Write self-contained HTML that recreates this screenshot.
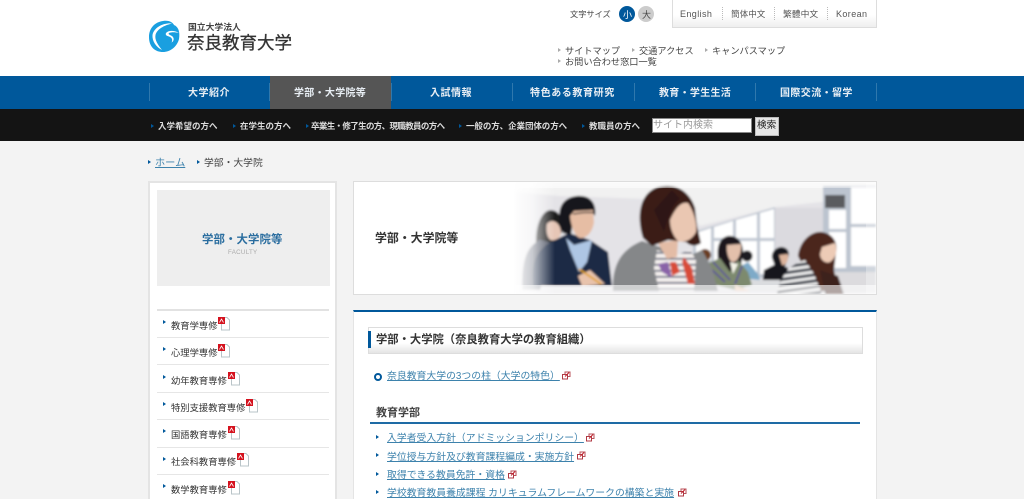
<!DOCTYPE html>
<html lang="ja"><head><meta charset="utf-8"><title>学部・大学院</title>
<style>
html,body{margin:0;padding:0;width:1024px;height:499px;overflow:hidden}
body{background:#f3f3f3;font-family:"Liberation Sans","Noto Sans CJK JP",sans-serif;color:#333}
#r{left:0;top:0;width:1024px;height:499px;overflow:hidden;background:#f3f3f3;filter:blur(.35px)}
div,span,a,svg{position:absolute;display:block}
.t{white-space:nowrap;line-height:14px;height:14px}
a{color:#3d82ac;text-decoration:underline}
.n{color:#e8eef4;font-weight:700;font-size:10px;letter-spacing:.5px;top:87px}
.s{color:#ddd;font-weight:700;font-size:8.5px;top:119px}
.sep{width:1px;height:18px;top:83px;background:#2f78ad}
.tri{width:0;height:0;border-left:3px solid #00589b;border-top:2.5px solid transparent;border-bottom:2.5px solid transparent}
.g{border-left-color:#aaa}
.side{font-size:9.3px;left:171px}
.ln{left:157px;width:172px;height:1px;background:#e6e6e6}
.m{font-size:9.85px;left:387px}
.lang{font-size:9px;color:#555;top:7px;letter-spacing:.4px}
.d{top:7px;width:0;height:13px;border-left:1px dotted #bbb}
.lk{font-size:9.2px;color:#444}
</style></head><body>
<div id="r">
<svg width="0" height="0" style="position:absolute"><defs>
<g id="pdf"><path d="M3.5 .5H9L11.5 3V13H3.5Z" fill="#fff" stroke="#b9c4c8"/><rect x="0" y="0" width="7" height="7" fill="#d5121e"/><path d="M1.5 5.5L3.5 2L5.5 5.5" fill="none" stroke="#fff" stroke-width=".8"/></g>
<g id="ext"><rect x="3" y="1" width="5" height="4.5" fill="#fff" stroke="#b8505a"/><rect x=".5" y="3.5" width="5" height="4.5" fill="#fff" stroke="#b03a44"/><path d="M3 5.5L7 1.5" stroke="#c2202c"/></g>
</defs></svg>

<div style="left:0;top:0;width:1024px;height:76px;background:#fff"></div>
<svg style="left:147px;top:19px" width="34" height="36" viewBox="0 0 34 36">
<path d="M16 2C23 1 26 4 27 6C32 8 33 14 32 20C30 28 23 33 16 33C8 33 2 28 2 18C2 9 8 3 16 2Z" fill="#1a9fe0"/>
<path d="M25 4.5C17 3.5 7 8 5.5 16C5 22 9 28 15 31C11 26 7.5 21 8.5 16C10 10 17 6.5 25 4.5Z" fill="#fff"/>
<path d="M32 14C27 11 21 11.5 19 14C18 16 20 17 22 17.5C25 18.5 26 21 24.5 23.5C27.5 22 27.5 18 24 16.5C22 15.5 21 15 22 14C24.5 13 28 13 32 14Z" fill="#fff"/>
</svg>
<div class="t" style="left:188px;top:20px;font-size:8.8px;font-weight:700;color:#444">国立大学法人</div>
<div class="t" style="left:187px;top:36px;font-size:17.5px;color:#333;-webkit-text-stroke:.3px #333">奈良教育大学</div>

<div class="t" style="left:570px;top:8px;font-size:8.2px;color:#444">文字サイズ</div>
<div style="left:619px;top:6px;width:16px;height:16px;border-radius:50%;background:#00589b"></div>
<div class="t" style="left:623px;top:8px;font-size:9px;color:#fff">小</div>
<div style="left:638px;top:6px;width:16px;height:16px;border-radius:50%;background:#ccc"></div>
<div class="t" style="left:642px;top:8px;font-size:9px;color:#444">大</div>

<div style="left:672px;top:-1px;width:203px;height:27px;border:1px solid #ddd;background:linear-gradient(#fff 55%,#eee)"></div>
<div class="t lang" style="left:680px">English</div>
<div class="t lang" style="left:731px;letter-spacing:0;font-size:8.6px">簡体中文</div>
<div class="t lang" style="left:783px;letter-spacing:0;font-size:8.8px">繁體中文</div>
<div class="t lang" style="left:836px">Korean</div>
<div class="d" style="left:722px"></div><div class="d" style="left:774px"></div><div class="d" style="left:827px"></div>

<div class="tri g" style="left:558px;top:48px"></div><div class="t lk" style="left:565px;top:44px">サイトマップ</div>
<div class="tri g" style="left:632px;top:48px"></div><div class="t lk" style="left:639px;top:44px">交通アクセス</div>
<div class="tri g" style="left:705px;top:48px"></div><div class="t lk" style="left:712px;top:44px">キャンパスマップ</div>
<div class="tri g" style="left:558px;top:59px"></div><div class="t lk" style="left:565px;top:55px">お問い合わせ窓口一覧</div>

<div style="left:0;top:76px;width:1024px;height:33px;background:#00589b"></div>
<div style="left:270px;top:76px;width:121px;height:33px;background:#555"></div>
<div class="sep" style="left:149px"></div><div class="sep" style="left:269px"></div><div class="sep" style="left:391px"></div><div class="sep" style="left:512px"></div><div class="sep" style="left:634px"></div><div class="sep" style="left:755px"></div><div class="sep" style="left:876px"></div>
<div class="t n" style="left:188px">大学紹介</div>
<div class="t n" style="left:294px;letter-spacing:.3px">学部・大学院等</div>
<div class="t n" style="left:430px">入試情報</div>
<div class="t n" style="left:530px;letter-spacing:.6px">特色ある教育研究</div>
<div class="t n" style="left:659px;letter-spacing:.3px">教育・学生生活</div>
<div class="t n" style="left:780px;letter-spacing:.4px">国際交流・留学</div>

<div style="left:0;top:109px;width:1024px;height:32px;background:#141414"></div>
<div class="tri" style="left:151px;top:124px"></div><div class="t s" style="left:158px">入学希望の方へ</div>
<div class="tri" style="left:233px;top:124px"></div><div class="t s" style="left:240px">在学生の方へ</div>
<div class="tri" style="left:306px;top:124px"></div><div class="t s" style="left:311px;letter-spacing:-.65px">卒業生・修了生の方、現職教員の方へ</div>
<div class="tri" style="left:459px;top:124px"></div><div class="t s" style="left:466px;letter-spacing:-.08px">一般の方、企業団体の方へ</div>
<div class="tri" style="left:582px;top:124px"></div><div class="t s" style="left:589px">教職員の方へ</div>
<div style="left:652px;top:118px;width:98px;height:13px;background:#fff;border:1px solid #888"></div>
<div class="t" style="left:653px;top:119px;font-size:10px;color:#999">サイト内検索</div>
<div style="left:755px;top:117px;width:22px;height:17px;background:#e6e6e6;border:1px solid #bbb"></div>
<div class="t" style="left:757px;top:119px;font-size:9.6px;color:#222">検索</div>

<div class="tri" style="left:148px;top:160px"></div>
<a class="t" style="left:155px;top:157px;font-size:10.2px;height:13px">ホーム</a>
<div class="tri" style="left:197px;top:160px"></div>
<div class="t" style="left:204px;top:157px;font-size:9.8px;color:#444">学部・大学院</div>

<!-- sidebar -->
<div style="left:148px;top:181px;width:185px;height:330px;background:#fff;border:2px solid #e4e4e4"></div>
<div style="left:157px;top:190px;width:173px;height:96px;background:#eee"></div>
<div class="t" style="left:202px;top:233px;font-size:11.4px;font-weight:700;color:#2a6d9f;letter-spacing:.1px">学部・大学院等</div>
<div class="t" style="left:228px;top:246px;font-size:6.2px;color:#aaa;letter-spacing:.3px">FACULTY</div>
<div class="ln" style="top:309px;height:2px;background:#e2e2e2"></div>
<div class="ln" style="top:337px"></div><div class="ln" style="top:364px"></div><div class="ln" style="top:392px"></div><div class="ln" style="top:419px"></div><div class="ln" style="top:447px"></div><div class="ln" style="top:474px"></div>

<div class="tri" style="left:163px;top:320px"></div><div class="t side" style="top:319px">教育学専修</div><svg style="left:218px;top:317px" width="12" height="14"><use href="#pdf"/></svg>
<div class="tri" style="left:163px;top:347px"></div><div class="t side" style="top:346px">心理学専修</div><svg style="left:218px;top:344px" width="12" height="14"><use href="#pdf"/></svg>
<div class="tri" style="left:163px;top:375px"></div><div class="t side" style="top:374px">幼年教育専修</div><svg style="left:228px;top:372px" width="12" height="14"><use href="#pdf"/></svg>
<div class="tri" style="left:163px;top:402px"></div><div class="t side" style="top:401px">特別支援教育専修</div><svg style="left:246px;top:399px" width="12" height="14"><use href="#pdf"/></svg>
<div class="tri" style="left:163px;top:429px"></div><div class="t side" style="top:428px">国語教育専修</div><svg style="left:228px;top:426px" width="12" height="14"><use href="#pdf"/></svg>
<div class="tri" style="left:163px;top:457px"></div><div class="t side" style="top:455px">社会科教育専修</div><svg style="left:237px;top:453px" width="12" height="14"><use href="#pdf"/></svg>
<div class="tri" style="left:163px;top:484px"></div><div class="t side" style="top:483px">数学教育専修</div><svg style="left:228px;top:481px" width="12" height="14"><use href="#pdf"/></svg>

<!-- banner -->
<div style="left:353px;top:181px;width:522px;height:112px;background:#fff;border:1px solid #ddd"></div>
<svg style="left:354px;top:182px" width="522" height="112" viewBox="354 182 522 112">
<defs>
<filter id="b" x="-5%" y="-5%" width="110%" height="110%"><feGaussianBlur stdDeviation="1"/></filter>
<linearGradient id="fade" x1="0" x2="1" y1="0" y2="0"><stop offset="0" stop-color="#fff"/><stop offset=".5" stop-color="#fff" stop-opacity=".7"/><stop offset="1" stop-color="#fff" stop-opacity="0"/></linearGradient>
<pattern id="stripe" width="8" height="6" patternUnits="userSpaceOnUse" patternTransform="rotate(-8)"><rect width="8" height="6" fill="#eee"/><rect width="8" height="3" fill="#3a3f4c"/></pattern>
<pattern id="stripe2" width="8" height="6" patternUnits="userSpaceOnUse"><rect width="8" height="6" fill="#f4f0ee"/><rect width="8" height="1.6" fill="#3c4868"/></pattern>
</defs>
<g filter="url(#b)">
<rect x="515" y="182" width="361" height="112" fill="#e4e3e7"/>
<path d="M515 182H876V196L775 207L700 226L680 200L560 196L515 192Z" fill="#f1f1f1"/>
<path d="M515 182H876V188H515Z" fill="#f7f7f7"/>
<!-- windows -->
<path d="M693 232L775 207V278H693Z" fill="#c0c7d2"/>
<path d="M696 233L711 228V262H696ZM714 227L733 221V238H714ZM714 241H733V268H714ZM736 220L757 214V238H736ZM736 241H757V272H736ZM760 213L774 209V238H760ZM760 241H774V274H760Z" fill="#fff"/>
<rect x="775" y="208" width="48" height="70" fill="#dbdadf"/>
<rect x="823" y="186" width="53" height="86" fill="#bcc4cf"/>
<path d="M829 210H846V229H829ZM829 232H846V268H829ZM851 187H876V224H851ZM851 227H876V266H851Z" fill="#fff"/>
<rect x="825" y="195" width="20" height="13" fill="#5a5b5f"/>
<rect x="823" y="272" width="53" height="20" fill="#dcdbde"/>
<!-- back woman -->
<path d="M536 245C534 228 541 211 550 210C559 210 563 218 562 232L556 240L545 246Z" fill="#1c1a1e"/>
<path d="M547 224C552 218 560 222 561 232C561 238 556 241 551 240C547 238 546 230 547 224Z" fill="#e6c6b6"/>
<path d="M522 290C521 262 526 246 540 240L556 244L540 290Z" fill="#4a5060"/>
<!-- man -->
<path d="M533 286C530 262 537 248 555 240L569 233L590 240L608 252L612 286Z" fill="#1d2a45"/>
<path d="M566 238L574 245L592 240L587 262L579 272L570 250Z" fill="#aec6e4"/>
<path d="M563 233C555 212 560 198 577 196C590 195 597 203 595 216L592 212L574 214L571 235Z" fill="#17151a"/>
<path d="M570 216L574 211L593 210L594 222C593 230 588 238 581 238C575 238 571 226 570 216Z" fill="#e6bda4"/>
<path d="M573 214L584 212.5L595 212.5" stroke="#222" stroke-width="1.2" fill="none"/>
<path d="M578 276L590 270L605 284L582 286Z" fill="#e8c3ac"/>
<path d="M579 269L601 284" stroke="#e0a020" stroke-width="1.8"/>
<!-- small people -->
<circle cx="705" cy="255" r="6" fill="#6a3e22"/>
<rect x="698" y="260" width="14" height="20" fill="#c0c5cc"/>
<circle cx="747" cy="256" r="5.5" fill="#1a1a20"/>
<path d="M740 278L741 266L748 262L758 274L760 280Z" fill="#7eaac8"/>
<!-- man 3 -->
<path d="M772 258C771 252 776 247 782 247C788 248 790 252 788 258L785 266L775 266Z" fill="#14141a"/>
<path d="M779 255L788 254C789 260 786 266 782 265Z" fill="#dcb49c"/>
<path d="M762 287L764 270L778 263L788 268L786 288Z" fill="#16181f"/>
<rect x="748" y="280" width="32" height="12" fill="#dadcdf"/>
<!-- girl 2 -->
<path d="M720 270C715 250 718 238 728 236C738 235 743 243 743 252L741 266L736 276L726 272Z" fill="#1a171b"/>
<path d="M727 245L741 244C742 252 738 262 733 262C729 262 726 252 727 245Z" fill="#e3c0ab"/>
<path d="M707 264L720 258L730 272L738 260L748 272L752 285L735 290L712 284Z" fill="#7d8a6e"/>
<path d="M710 268L725 282M713 262L730 280M742 266L735 284" stroke="#5a4f9a" stroke-width="1.6"/>
<path d="M730 262L733 274L738 264Z" fill="#f4f4e8"/>
<path d="M735 285L750 291L735 291Z" fill="#e8c8b0"/>
<!-- main woman -->
<path d="M613 291C612 266 620 250 642 241L663 248L680 260L702 250L712 268L718 291Z" fill="#858789"/>
<path d="M657 250L674 256L690 250L696 260L694 291H659L654 268Z" fill="url(#stripe2)"/>
<path d="M670 262L672 276L680 272L676 262ZM684 257L692 268L695 284L688 284L682 262Z" fill="#d84b38"/>
<path d="M658 264L668 262L672 278L662 272Z" fill="#8a63a8"/>
<path d="M658 243L678 240L677 257L667 259Z" fill="#e3bca6"/>
<path d="M643 238C636 215 640 193 658 187C676 182 690 192 695 208L697 226L701 243C696 247 690 246 686 242L668 240L652 246Z" fill="#3a1f19"/>
<path d="M670 220C674 211 680 201 688 203C695 213 697 226 696 232C692 240 684 243 678 241C673 236 670 228 670 220Z" fill="#eac7b2"/>
<path d="M672 190L680 199C672 204 668 218 664 232L654 210Z" fill="#2d1714"/>
<!-- girl 3 -->
<path d="M798 256C800 240 812 231 822 232C834 234 838 244 836 252L834 270L838 290L815 292L802 264Z" fill="#4c261d"/>
<path d="M822 247L835 243C838 250 836 258 830 262C826 264 820 260 820 254Z" fill="#edcbb6"/>
<path d="M777 294C780 276 790 264 805 260L814 274L822 294Z" fill="url(#stripe)"/>
<path d="M820 270L838 276L844 294H825Z" fill="#3d201a"/>
</g>
<rect x="510" y="182" width="45" height="112" fill="url(#fade)"/>
<rect x="515" y="285" width="361" height="9" fill="#fff" opacity=".6"/>
<rect x="515" y="182" width="361" height="6" fill="#fff" opacity=".4"/>
<rect x="866" y="182" width="10" height="112" fill="#fff" opacity=".3"/>
</svg>
<div class="t" style="left:375px;top:231px;font-size:11.9px;font-weight:700;color:#333">学部・大学院等</div>

<!-- main -->
<div style="left:353px;top:310px;width:522px;height:200px;background:#fff;border:1px solid #e4e4e4;border-top:2px solid #00589b"></div>
<div style="left:368px;top:327px;width:493px;height:25px;border:1px solid #ddd;background:linear-gradient(#fff 60%,#e4e4e4)"></div>
<div style="left:368px;top:331px;width:3px;height:17px;background:#00589b"></div>
<div class="t" style="left:376px;top:333px;font-size:11.3px;font-weight:700;color:#333">学部・大学院（奈良教育大学の教育組織）</div>

<div style="left:374px;top:373px;width:4px;height:4px;border:2px solid #00589b;border-radius:50%;background:#fff"></div>
<a class="t m" style="top:370px;height:13px">奈良教育大学の3つの柱（大学の特色）</a>
<svg style="left:562px;top:371px" width="9" height="9"><use href="#ext"/></svg>

<div class="t" style="left:376px;top:406px;font-size:11px;font-weight:700;color:#444">教育学部</div>
<div style="left:370px;top:422px;width:490px;height:1.5px;background:#1e6ba5"></div>

<div class="tri" style="left:376px;top:435px"></div><a class="t m" style="top:432px;height:13px">入学者受入方針（アドミッションポリシー）</a><svg style="left:586px;top:433px" width="9" height="9"><use href="#ext"/></svg>
<div class="tri" style="left:376px;top:453px"></div><a class="t m" style="top:451px;height:13px">学位授与方針及び教育課程編成・実施方針</a><svg style="left:577px;top:451px" width="9" height="9"><use href="#ext"/></svg>
<div class="tri" style="left:376px;top:472px"></div><a class="t m" style="top:469px;height:13px">取得できる教員免許・資格</a><svg style="left:508px;top:470px" width="9" height="9"><use href="#ext"/></svg>
<div class="tri" style="left:376px;top:490px"></div><a class="t m" style="top:487px;height:13px">学校教育教員養成課程 カリキュラムフレームワークの構築と実施</a><svg style="left:678px;top:488px" width="9" height="9"><use href="#ext"/></svg>
</div>
</body></html>
